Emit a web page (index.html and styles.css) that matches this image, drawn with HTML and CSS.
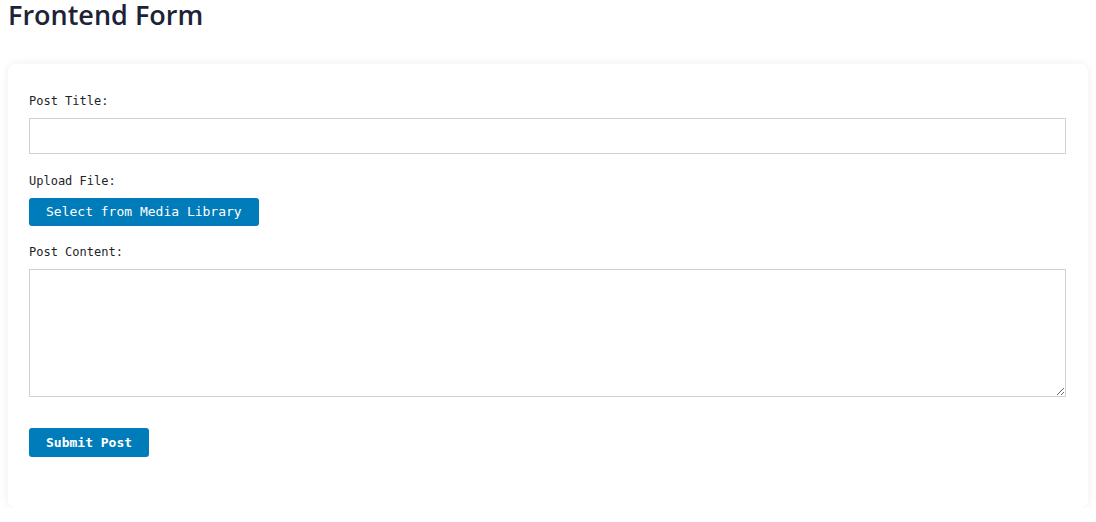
FILE: index.html
```html
<!DOCTYPE html>
<html>
<head>
<meta charset="utf-8">
<link rel="stylesheet" href="styles.css">
</head>
<body>
<h1 class="page-title">Frontend Form</h1>
<div class="card">
  <form class="post-form">
    <div class="field">
      <label class="field-label" for="title">Post Title:</label>
      <input class="text-input" id="title" type="text">
    </div>
    <div class="field field-upload">
      <label class="field-label">Upload File:</label>
      <button type="button" class="btn">Select from Media Library</button>
    </div>
    <div class="field field-content">
      <label class="field-label" for="content">Post Content:</label>
      <textarea class="text-area" id="content"></textarea>
    </div>
    <div class="actions">
      <button type="button" class="btn btn-bold">Submit Post</button>
    </div>
  </form>
</div>
</body>
</html>
```
FILE: styles.css
```css
html, body {
  margin: 0;
  padding: 0;
  background: #ffffff;
}
body {
  padding: 0 8px;
  font-family: "DejaVu Sans Mono", monospace;
}
.page-title {
  margin: 0;
  font-family: "Open Sans", "Noto Sans", sans-serif;
  font-weight: 600;
  font-size: 27px;
  line-height: 30px;
  color: #1d2337;
}
.card {
  margin-top: 34px;
  background: #ffffff;
  border-radius: 8px;
  box-shadow: 0 0 10px rgba(0, 0, 0, 0.07);
  padding: 29px 22px 51px 21px;
}
.post-form {
  display: flex;
  flex-direction: column;
}
.field {
  display: flex;
  flex-direction: column;
  align-items: flex-start;
  margin-bottom: 19px;
}
.field-upload {
  margin-bottom: 18px;
}
.field-content {
  margin-bottom: 31px;
}
.field-label {
  font-size: 12px;
  line-height: 17px;
  color: #1d2327;
  margin-bottom: 8px;
}
.text-input {
  box-sizing: border-box;
  width: 100%;
  height: 36px;
  border: 1px solid #d0d0d6;
  border-radius: 0;
  margin: 0;
  padding: 0 8px;
  background: #fff;
}
.text-area {
  box-sizing: border-box;
  width: 100%;
  height: 128px;
  border: 1px solid #d0d0d6;
  border-radius: 0;
  margin: 0;
  padding: 6px 8px;
  resize: vertical;
  display: block;
}
.btn {
  font-family: "DejaVu Sans Mono", monospace;
  font-size: 13px;
  line-height: 16px;
  background: #007cba;
  color: #ffffff;
  border: none;
  border-radius: 3px;
  padding: 6px 17px;
  height: 28px;
  cursor: pointer;
}
.btn-bold {
  font-weight: bold;
  height: 29px;
}
.actions {
  display: flex;
}
```
